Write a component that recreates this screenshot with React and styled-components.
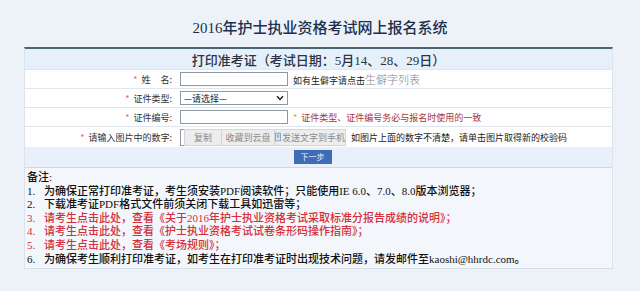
import React from 'react';
import styled, { createGlobalStyle } from 'styled-components';

const GlobalStyle = createGlobalStyle`
  html, body {
    margin: 0;
    padding: 0;
    background: #edf2f9;
  }
  body {
    font-family: "Noto Sans CJK SC", "Noto Sans", sans-serif;
  }
`;

const Page = styled.div`
  width: 640px;
  height: 291px;
  overflow: hidden;
  background: #edf2f9;
`;

const Title = styled.h1`
  margin: 0;
  height: 47px;
  display: flex;
  align-items: center;
  justify-content: center;
  padding-top: 5px;
  box-sizing: border-box;
  font-family: "Liberation Serif", "Noto Sans CJK SC", serif;
  font-size: 15px;
  font-weight: 500;
  color: #1d2f4a;
`;

const Panel = styled.div`
  margin-left: 24px;
  width: 589px;
  border-top: 2px solid #4b6473;
  border-left: 1px solid #dbe3ec;
  border-right: 1px solid #dbe3ec;
  border-bottom: 1px solid #d5dde7;
  box-sizing: border-box;
`;

const Header = styled.div`
  height: 20px;
  display: flex;
  align-items: center;
  justify-content: center;
  background: #e6f0fa;
  font-family: "Liberation Serif", "Noto Sans CJK SC", serif;
  font-size: 13px;
  font-weight: 500;
  color: #2b3442;
`;

const Rows = styled.div`
  display: flex;
  flex-direction: column;
  gap: 1px;
  background: #dfe6ee;
  padding-top: 1px;
`;

const Row = styled.div`
  display: grid;
  grid-template-columns: 151px 1fr;
  height: ${p => p.$h || 18}px;
  background: #fefefe;
  align-items: center;
`;

const Label = styled.div`
  text-align: right;
  padding-right: 4px;
  font-size: 9px;
  color: #333;
  white-space: pre;
`;

const Star = styled.span`
  color: ${p => p.$color || '#e0607a'};
  margin-right: 4px;
`;

const Field = styled.div`
  display: flex;
  align-items: center;
  gap: 5px;
  padding-left: 4px;
  font-size: 9px;
  color: #222;
  white-space: nowrap;
`;

const Input = styled.div`
  width: 108px;
  height: 14px;
  box-sizing: border-box;
  border: 1px solid #8d98a5;
  background: #fff;
`;

const Select = styled(Input)`
  display: flex;
  align-items: center;
  justify-content: space-between;
  padding: 0 3px 0 3px;
  font-size: 9px;
  color: #222;
`;

const RareLink = styled.span`
  font-size: 11px;
  color: #8a8a8a;
  font-weight: 300;
`;

const Warn = styled.span`
  color: #a8343a;
`;

const CaptchaBox = styled.div`
  position: relative;
  width: 166px;
  height: 17px;
  flex-shrink: 0;
`;

const CaptchaInput = styled(Input)`
  width: 10px;
  height: 17px;
  border-right: none;
`;

const CopyBar = styled.div`
  position: absolute;
  left: 4px;
  top: 0;
  right: 0;
  bottom: 0;
  display: flex;
  align-items: center;
  background: #ededed;
  border: 1px solid #d6d6d6;
  box-sizing: border-box;
`;

const BarButton = styled.div`
  display: flex;
  align-items: center;
  justify-content: center;
  gap: 1px;
  height: 100%;
  width: ${p => p.$w}px;
  font-size: 9px;
  color: #8b8b8b;
  border-right: ${p => (p.$last ? 'none' : '1px solid #d2d2d2')};
  box-sizing: border-box;
`;

const ButtonRow = styled.div`
  height: 20px;
  display: flex;
  align-items: center;
  justify-content: center;
  padding-right: 12px;
  background: #e9f0f9;
  border-bottom: 1px solid #cfd8e3;
`;

const NextButton = styled.button`
  width: 38px;
  height: 14px;
  padding: 0;
  border: none;
  background: #3f6db5;
  color: #e8eefa;
  font-family: "Noto Sans CJK SC", sans-serif;
  font-size: 8px;
  line-height: 14px;
`;

const Notes = styled.div`
  background: #f3f6fb;
  padding: 3px 0 2px 2px;
  font-family: "Liberation Serif", "Noto Sans CJK SC", serif;
  font-size: 11px;
  font-weight: 500;
  line-height: 13.6px;
  color: #111;
`;

const NoteLine = styled.div`
  display: flex;
  white-space: nowrap;
  color: ${p => (p.$red ? '#d3303c' : '#111')};
`;

const Num = styled.span`
  width: 17px;
  flex-shrink: 0;
`;

const Chevron = () => (
  <svg width="8" height="6" viewBox="0 0 8 6">
    <path d="M1 1.2 L4 4.4 L7 1.2" fill="none" stroke="#222" strokeWidth="1.5" />
  </svg>
);

const PhoneIcon = () => (
  <svg width="7" height="10" viewBox="0 0 7 10">
    <rect x="0.5" y="0.5" width="6" height="9" fill="#d8e6f3" stroke="#7d9cc0" />
    <rect x="2" y="2" width="3" height="4" fill="#9dbbe0" />
  </svg>
);

const notes = [
  { n: '1.', t: '为确保正常打印准考证，考生须安装PDF阅读软件；只能使用IE 6.0、7.0、8.0版本浏览器；' },
  { n: '2.', t: '下载准考证PDF格式文件前须关闭下载工具如迅雷等；' },
  { n: '3.', t: '请考生点击此处，查看《关于2016年护士执业资格考试采取标准分报告成绩的说明》；', red: true },
  { n: '4.', t: '请考生点击此处，查看《护士执业资格考试试卷条形码操作指南》；', red: true },
  { n: '5.', t: '请考生点击此处，查看《考场规则》；', red: true },
  { n: '6.', t: '为确保考生顺利打印准考证，如考生在打印准考证时出现技术问题，请发邮件至kaoshi@hhrdc.com。' },
];

export default function App() {
  return (
    <Page>
      <GlobalStyle />
      <Title>2016年护士执业资格考试网上报名系统</Title>
      <Panel>
        <Header>打印准考证（考试日期：5月14、28、29日）</Header>
        <Rows>
          <Row>
            <Label><Star>*</Star>{'姓     名:'}</Label>
            <Field>
              <Input />
              <span>如有生僻字请点击<RareLink>生僻字列表</RareLink></span>
            </Field>
          </Row>
          <Row>
            <Label><Star>*</Star>证件类型:</Label>
            <Field>
              <Select>
                <span>—请选择—</span>
                <Chevron />
              </Select>
            </Field>
          </Row>
          <Row>
            <Label><Star>*</Star>证件编号:</Label>
            <Field>
              <Input />
              <Warn><Star $color="#e8a23c">*</Star>证件类型、证件编号务必与报名时使用的一致</Warn>
            </Field>
          </Row>
          <Row $h={20}>
            <Label><Star>*</Star>请输入图片中的数字:</Label>
            <Field>
              <CaptchaBox>
                <CaptchaInput />
                <CopyBar>
                  <BarButton $w={38}>复制</BarButton>
                  <BarButton $w={54}>收藏到云盘</BarButton>
                  <BarButton $w={70} $last><PhoneIcon />发送文字到手机</BarButton>
                </CopyBar>
              </CaptchaBox>
              <span>如图片上面的数字不清楚，请单击图片取得新的校验码</span>
            </Field>
          </Row>
        </Rows>
        <ButtonRow>
          <NextButton>下一步</NextButton>
        </ButtonRow>
        <Notes>
          <NoteLine>备注:</NoteLine>
          {notes.map(item => (
            <NoteLine key={item.n} $red={item.red}>
              <Num>{item.n}</Num>
              <span>{item.t}</span>
            </NoteLine>
          ))}
        </Notes>
      </Panel>
    </Page>
  );
}
